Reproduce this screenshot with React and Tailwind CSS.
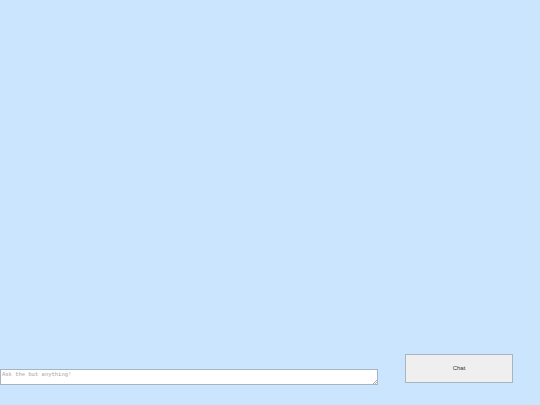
import React from "react";

export default function App() {
  return (
    <div className="h-[405px] w-[540px] bg-[#cce5ff] flex flex-col justify-end overflow-hidden">
      <div className="flex items-end">
        {/* input with a faint resize grip */}
        <div className="relative mb-[20px]">
          <textarea
            placeholder="Ask the bot anything!"
            className="block w-[378px] h-[16px] bg-white border border-[#a7b4c3] px-[1px] pt-[1px] pb-0 text-[5.5px] leading-[8px] text-black placeholder:text-[#a3a3a3] outline-none resize-none"
            style={{ fontFamily: '"Liberation Mono", monospace' }}
          />
          <svg
            className="absolute right-[1px] bottom-[1px]"
            width="5"
            height="5"
            viewBox="0 0 5 5"
          >
            <path d="M1 5L5 1M3 5L5 3" stroke="#a0a0a0" strokeWidth="0.8" />
          </svg>
        </div>
        <button
          className="ml-[27px] mb-[22px] w-[108px] h-[29px] bg-[#efefef] border border-[#a7b4c3] text-[6px] text-[#333]"
          style={{ fontFamily: '"Liberation Sans", Arial, sans-serif' }}
        >
          Chat
        </button>
      </div>
    </div>
  );
}
